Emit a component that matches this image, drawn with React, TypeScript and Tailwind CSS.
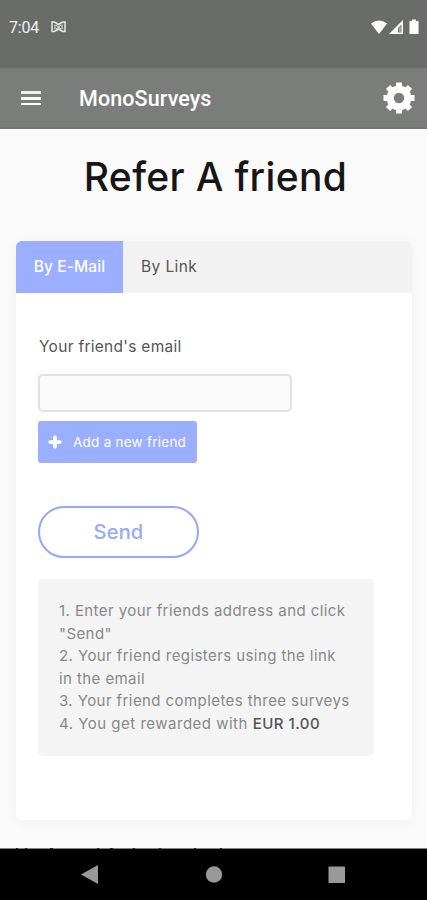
import { FaPlus } from 'react-icons/fa';

const STEPS = [
  { lines: ['1. Enter your friends address and click', '"Send"'] },
  { lines: ['2. Your friend registers using the link', 'in the email'] },
  { lines: ['3. Your friend completes three surveys'] },
];

export default function App() {
  return (
    <div className="flex h-[900px] w-[427px] flex-col overflow-hidden bg-[#fafafa] font-['Inter','Open_Sans',sans-serif] text-[#555]">
      <StatusBar />

      {/* App bar */}
      <header className="flex h-[61px] shrink-0 items-center border-b-2 border-[#727472] bg-[#7b7d7b] pr-3 pl-[21px] text-white">
        <button className="flex w-[20px] flex-col" aria-label="Menu">
          <span className="h-[3px] w-full bg-[#eee]" />
          <span className="mt-[3px] h-[3px] w-full bg-[#f8f8f8]" />
          <span className="mt-[3px] h-[2px] w-full bg-white" />
        </button>
        <span className="ml-[38px] pt-1 font-['Roboto',sans-serif] text-[21.5px] font-medium tracking-[0.1px]">
          MonoSurveys
        </span>
        <button className="mt-[1px] ml-auto" aria-label="Settings">
          <GearIcon />
        </button>
      </header>

      <main className="flex min-h-0 flex-1 flex-col overflow-hidden px-4">
        <h1 className="mt-[23px] ml-[4px] text-center text-[39px] leading-[50px] font-[450] tracking-[0.35px] whitespace-nowrap text-[#161616]">
          Refer A friend
        </h1>

        {/* Card */}
        <section className="mt-[39px] mr-[-1px] h-[579px] w-[396px] shrink-0 overflow-hidden rounded-[6px] bg-white shadow-[0_2px_14px_rgba(0,0,0,0.045)]">
          <div className="flex h-[52px] bg-[#f2f2f2] text-[15.5px] whitespace-nowrap">
            <button className="flex w-[107px] items-center justify-center bg-[#9baeff] font-medium tracking-[0.1px] text-white">
              By E-Mail
            </button>
            <button className="flex items-center px-[18px] tracking-[0.4px]">By Link</button>
          </div>

          <div className="flex flex-col items-start px-[22px] pt-[42px]">
            <label className="pl-px text-[15.5px] leading-6 tracking-[0.28px] whitespace-nowrap">
              Your friend's email
            </label>
            <input
              className="mt-[15px] h-[38px] w-[254px] rounded-[5px] border-2 border-[#e1e1e1] bg-[#fafafa]"
              aria-label="Friend's email"
            />
            <button className="mt-[9px] flex h-[42px] w-[159px] items-center rounded-[3px] bg-[#9baeff] pl-[10px] text-[13.5px] tracking-[0.25px] whitespace-nowrap text-white">
              <FaPlus className="mr-[11px] h-[14px] w-[14px]" stroke="white" strokeWidth="36" />
              Add a new friend
            </button>
            <button className="mt-[43px] flex h-[52px] w-[161px] items-center justify-center rounded-full border-2 border-[#93a9fb] text-[20px] font-medium tracking-[0.2px] text-[#93a9fb]">
              Send
            </button>

            <div className="mt-[21px] h-[177px] w-[336px] rounded-[5px] bg-[#f4f4f4] pt-[21px] pl-[21px] text-[15px] leading-[22.5px] tracking-[0.42px] whitespace-nowrap text-[#888]">
              {STEPS.map((step) =>
                step.lines.map((line) => <p key={line}>{line}</p>)
              )}
              <p className="tracking-[0.5px]">
                4. You get rewarded with <span className="font-medium text-[#555]">EUR 1.00</span>
              </p>
            </div>
          </div>
        </section>
      </main>

      <NavigationBar />
    </div>
  );
}

function StatusBar() {
  return (
    <div className="flex h-[68px] shrink-0 items-start bg-[#6a6c6a] pt-[18px] pr-[7px] pl-[9px] text-white">
      <span className="w-[30px] font-['Roboto',sans-serif] text-[16px] leading-5 tracking-[-0.2px] text-[#f0f0f0]">
        7:04
      </span>
      <svg className="mt-[3px] ml-[12px]" width="15" height="12" viewBox="0 0 15 12" fill="none" stroke="#e8e8e8">
        <path d="M1 1v9.500h2.500L7.500 8l4 2.500H14V1h-2.500L7.500 3.500 3.500 1z" strokeWidth="1.500" />
        <path d="M4 3.500v5M11 3.500v5M5 4l5 4M10 4L5 8" strokeWidth="1" />
      </svg>
      <svg className="mt-[1px] ml-auto" width="50" height="16" viewBox="0 0 50 16" fill="white">
        <path d="M1 4.500Q9 -1.500 17 4.500L9 15z" />
        <path d="M33 1v14H19z" />
        <path d="M31.500 5.500v8H28V9z" fill="#747674" />
        <path d="M30 8v5" stroke="#d5d5d5" />
        <path d="M40 2h2V.5h4V2h2.500v13h-9V2z" />
      </svg>
    </div>
  );
}

function GearIcon() {
  return (
    <svg width="32" height="32" viewBox="0 0 32 32" fill="none">
      <circle cx="16" cy="16" r="8.800" stroke="white" strokeWidth="7.200" />
      <g stroke="white" strokeWidth="6">
        <path d="M16 .5v6M16 25.500v6M.5 16h6M25.500 16h6" />
        <path d="M5 5l4 4M23 23l4 4M27 5l-4 4M9 23l-4 4" />
      </g>
    </svg>
  );
}

function NavigationBar() {
  return (
    <nav className="h-[52px] shrink-0 bg-black">
      <svg width="427" height="52" viewBox="0 0 427 52">
        <path d="M0 .5h427" stroke="#858585" />
        {/* Ascender tips of the line scrolled under the bar */}
        <path
          d="M16 .5h2M25 .5h2M50 .5h3M97 .5h2M110 .5h3M133 .5h2M159 .5h2M194 .5h2M220 .5h2"
          stroke="#222"
        />
        <path d="M98 17v19L81 26.500z" fill="#999" />
        <circle cx="214" cy="26.500" r="8.200" fill="#999" />
        <rect x="328.500" y="18.500" width="16.500" height="16.500" rx="0.500" fill="#999" />
      </svg>
    </nav>
  );
}
